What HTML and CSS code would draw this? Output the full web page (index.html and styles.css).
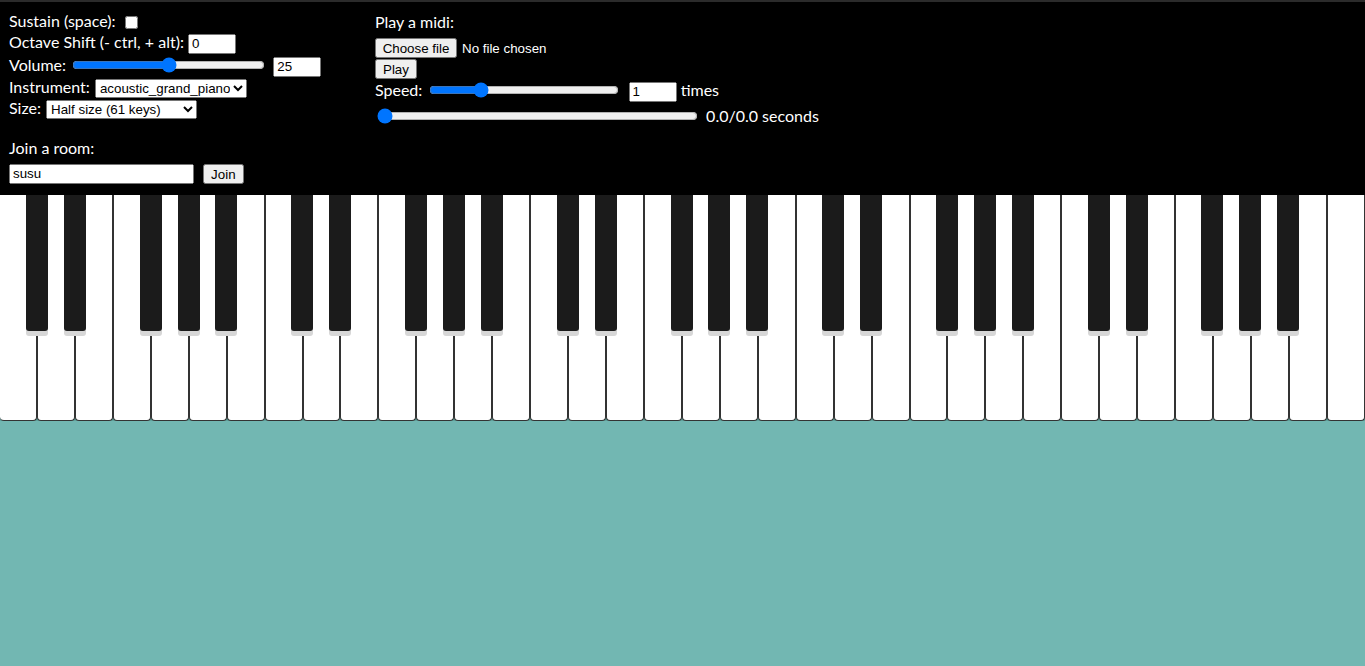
FILE: index.html
```html
<!DOCTYPE html>
<html>
<head>
<meta charset="utf-8">
<link rel="stylesheet" href="styles.css">
</head>
<body>
<div class="topline"></div>
<header class="controls">
  <div class="col col-left">
    <div class="row r1">Sustain (space): <input type="checkbox" class="chk"></div>
    <div class="row r2">Octave Shift (- ctrl, + alt): <input type="text" class="num" value="0"></div>
    <div class="row r3">Volume: <input type="range" class="rng rng-vol" min="0" max="100" value="50"> <input type="text" class="num" value="25"></div>
    <div class="row r4">Instrument: <select class="sel sel-inst"><option>acoustic_grand_piano</option></select></div>
    <div class="row r5">Size: <select class="sel sel-size"><option>Half size (61 keys)</option></select></div>
    <div class="row r6">Join a room:</div>
    <div class="row r7"><input type="text" class="room" value="susu"> <button class="btn">Join</button></div>
  </div>
  <div class="col col-right">
    <div class="row q1">Play a midi:</div>
    <div class="row q2"><label class="file"><button class="btn btn-file">Choose file</button><span class="file-name">No file chosen</span></label></div>
    <div class="row q3"><button class="btn">Play</button></div>
    <div class="row q4">Speed: <input type="range" class="rng rng-speed" min="0" max="4" step="0.01" value="1"> <input type="text" class="num" value="1"> times</div>
    <div class="row q5"><input type="range" class="rng rng-prog" min="0" max="100" value="0"> 0.0/0.0 seconds</div>
  </div>
</header>
<main class="piano" id="piano"></main>
<script src="app.js"></script>
</body>
</html>
```
FILE: app.js
```js
(function () {
  var piano = document.getElementById('piano');
  var whites = 36;
  var blackAfter = [0, 1, 3, 4, 5]; // C#, D#, F#, G#, A#
  for (var i = 0; i < whites; i++) {
    var w = document.createElement('div');
    w.className = 'white';
    piano.appendChild(w);
  }
  for (var k = 0; k < whites - 1; k++) {
    if (blackAfter.indexOf(k % 7) !== -1) {
      var b = document.createElement('div');
      b.className = 'black';
      b.style.left = 'calc(' + ((k + 1) * 100 / whites) + '% - 12px)';
      piano.appendChild(b);
    }
  }
})();
```
FILE: styles.css
```css
html, body {
  margin: 0;
  padding: 0;
}
body {
  background: #72b7b2;
  font-family: "Lato", "Open Sans", sans-serif;
  font-size: 16px;
  color: #ffffff;
  overflow: hidden;
}
.topline {
  height: 2px;
  background: #2b2b2b;
}
.controls {
  background: #000000;
  height: 193px;
  display: flex;
  padding: 8px 0 0 9px;
  box-sizing: border-box;
}
.col-left {
  width: 366px;
}
.row {
  white-space: nowrap;
}
.r1 { height: 21px; line-height: 21px; }
.r2 { height: 21px; line-height: 21px; }
.r3 { height: 25px; line-height: 25px; }
.r4 { height: 20px; line-height: 20px; }
.r5 { height: 22px; line-height: 22px; }
.r6 { height: 22px; line-height: 22px; margin-top: 18px; }
.r7 { height: 26px; line-height: 26px; }
.col-right { padding-top: 1px; }
.q1 { height: 21px; line-height: 21px; }
.q2 { height: 25px; line-height: 25px; }
.q3 { height: 19px; line-height: 19px; }
.q4 { height: 28px; line-height: 28px; }
.q5 { height: 23px; line-height: 23px; }

input, select, button {
  font-family: "Liberation Sans", Arial, sans-serif;
  font-size: 13.333px;
  vertical-align: middle;
}
.chk {
  width: 13px;
  height: 13px;
  margin: 0 3px 0 5px;
}
.num {
  width: 48px;
  height: 20px;
  box-sizing: border-box;
  padding: 1px 2px;
  margin: 0;
}
.rng {
  margin: 2px 4px 6px 2px;
  height: 16px;
}
.rng-vol { width: 193px; }
.rng-speed { width: 190px; margin-left: 3px; margin-right: 5px; }
.rng-prog { width: 321px; }
.sel {
  height: 19px;
  padding: 0;
  margin: 0 0 0 1px;
}
.sel-inst { width: 152px; }
.sel-size { width: 151px; }
.room {
  width: 185px;
  height: 20px;
  box-sizing: border-box;
  margin: 0 5px 0 0;
  padding: 1px 2px;
}
.btn {
  height: 20px;
  padding: 1px 6px;
  margin: 0;
}
.btn-file {
  width: 82px;
  padding: 1px 0;
}
.file {
  display: inline-block;
  vertical-align: middle;
}
.file-name {
  font-family: "Liberation Sans", Arial, sans-serif;
  font-size: 13.333px;
  margin-left: 5px;
  vertical-align: middle;
}

.piano {
  position: relative;
  display: flex;
  height: 226px;
}
.white {
  flex: 1 1 0;
  background: #ffffff;
  border-left: 1px solid #333333;
  border-right: 1px solid #333333;
  border-bottom: 1px solid #333333;
  border-radius: 0 0 4px 4px;
  box-shadow: 0 5px 0 #5f9f9a;
  box-sizing: border-box;
}
.white:first-child {
  border-left: none;
}
.black {
  position: absolute;
  top: 0;
  width: 22px;
  height: 136px;
  background: #1b1b1b;
  border-radius: 0 0 3px 3px;
  box-shadow: 0 5px 0 #d7d7d7;
}
```
